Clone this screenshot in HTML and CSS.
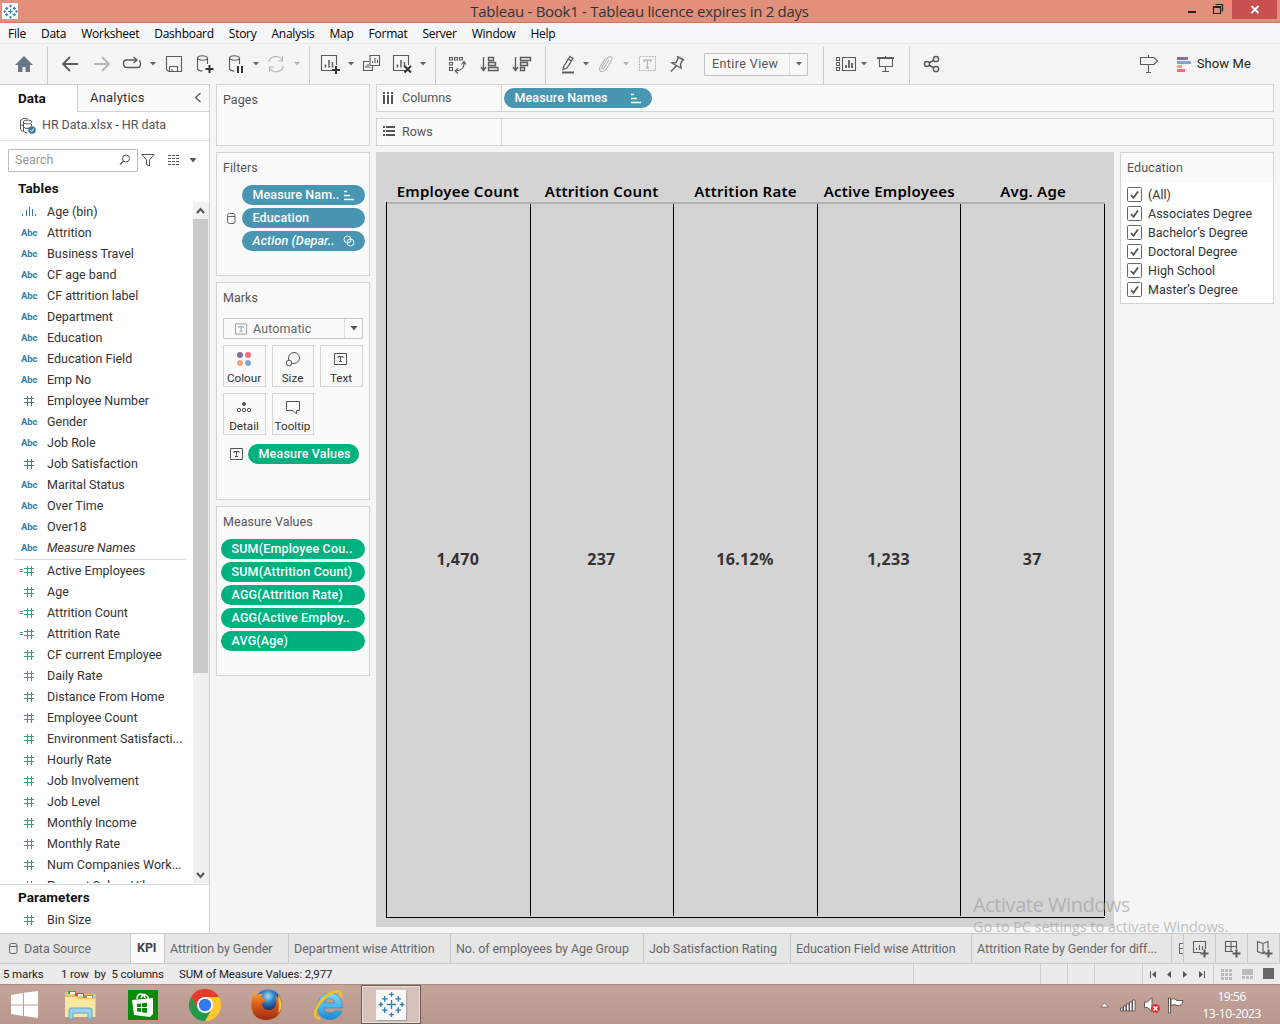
FILE: index.html
```html
<!DOCTYPE html>
<html lang="en">
<head>
<meta charset="utf-8">
<title>Tableau - Book1</title>
<link rel="stylesheet" href="styles.css">
</head>
<body>
<svg class="defs" width="0" height="0">
  <symbol id="logo" viewBox="0 0 24 24"><path d="M12 8v8M8 12h8M6 4.500v5M3.500 7h5M18 4.500v5M15.500 7h5M6 14.500v5M3.500 17h5M18 14.500v5M15.500 17h5M12 1v4M10 3h4M12 19v4M10 21h4M2.500 10v4M.5 12h4M21.500 10v4M19.500 12h4"/></symbol>
  <symbol id="caret" viewBox="0 0 8 20"><path d="M1 8h6L4 11.500z"/></symbol>
  <symbol id="num" viewBox="0 0 20 20"><path d="M7.500 5v10M11.500 5v10M4 7.500h10M4 11.500h10" fill="none"/></symbol>
  <symbol id="calc" viewBox="0 0 20 20"><path d="M7.500 5v10M11.500 5v10M4 7.500h10M4 11.500h10M0 8.500h3M0 10.500h3" fill="none"/></symbol>
  <symbol id="bin" viewBox="0 0 20 20"><path d="M2.500 12v2M6.500 8v6M9.500 5v9M12.500 7v7M15.500 12v2" fill="none"/></symbol>
  <symbol id="chart" viewBox="0 0 20 20"><path d="M14 16.500H1.500v-15h15V11"/><path stroke-width="1.500" d="M5.500 13.500v-3M9 13.500V6M12.500 13.500V8"/></symbol>
  <symbol id="cyl" viewBox="0 0 20 20"><ellipse cx="6.500" cy="4" rx="5" ry="2.200"/><path d="M1.500 4v11q1 2 5 2M11.500 4v6"/></symbol>
  <symbol id="tbox" viewBox="0 0 14 14"><path d="M.5 1.500h12v11H.5zM4 6V4.500h5V6M6.500 4.500v5M5 9.500h3"/></symbol>
  <symbol id="check" viewBox="0 0 15 15"><rect x=".5" y=".5" width="14" height="14" rx="1" fill="#fff" stroke="#666"/><path d="M4 8l2.500 2.800L11 4.500" fill="none" stroke="#555" stroke-width="1.800"/></symbol>
</svg>

<div class="window">
<header class="titlebar">
  <span class="applogo"><svg class="logo"><use href="#logo"/></svg></span>
  <h1>Tableau - Book1 - Tableau licence expires in 2 days</h1>
  <div class="winbtns">
    <svg width="55" height="22"><path d="M11 12h8" stroke="#222" stroke-width="2"/><path d="M36.500 6.500h7v7h-7zM36 7.500h8M38.500 4.500h7v7" fill="none" stroke="#222" stroke-width="1.200"/></svg>
    <span class="close"><svg width="10" height="9"><path d="M1.500 1l7 7M8.500 1l-7 7" stroke="#fff" stroke-width="1.800"/></svg></span>
  </div>
</header>
<nav class="menu"><span>File</span><span>Data</span><span>Worksheet</span><span>Dashboard</span><span>Story</span><span>Analysis</span><span>Map</span><span>Format</span><span>Server</span><span>Window</span><span>Help</span></nav>

<div class="toolbar">
  <div class="group g1"><svg class="ic home"><path d="M10 2L1 11h3v7h4.500v-5h3v5H16v-7h3z"/></svg></div>
  <div class="group g2">
    <svg class="ic thick"><path d="M18 10H3M10 3l-7 7 7 7"/></svg>
    <svg class="ic thick off s12"><path d="M2 10h15M10 3l7 7-7 7"/></svg>
    <svg class="ic s10"><path d="M14 6H4.500Q1.500 6 1.500 9.500T4.500 13.500h11q3 0 3-4 0-2-1.500-3M11.500 3l3.500 3-3.500 3" stroke-width="1.400"/></svg>
    <svg class="caret s7"><use href="#caret"/></svg>
    <svg class="ic s7"><path d="M2.500 2.500h15v15h-13l-2-2zM5.500 17v-4.500h8V17M8 15v2"/></svg>
    <svg class="ic s12"><use href="#cyl"/><path class="bold" d="M9.500 15h8M13.500 11v8"/></svg>
    <svg class="ic s10"><use x="2" href="#cyl"/><path class="bold" d="M12 12v7M16 12v7"/></svg>
    <svg class="caret s6"><use href="#caret"/></svg>
    <svg class="ic off s6"><path d="M2.500 8a7.500 7.500 0 0 1 13.500-2M16.500 2v5h-4.500M17.500 12A7.500 7.500 0 0 1 4 14.500M3.500 18v-5H8"/></svg>
    <svg class="caret off s7"><use href="#caret"/></svg>
  </div>
  <div class="group g3">
    <svg class="ic"><use href="#chart"/><path class="bold" d="M12 16h8M16 12v8"/></svg>
    <svg class="caret s7"><use href="#caret"/></svg>
    <svg class="ic s7"><path d="M8 1.500h9.500v10H8zM10.500 9V7M13 9V4M15.500 9V6M7 7.500H1.500v9h9V12M4 14v-2.500M6 14v-4M8 14v-1"/></svg>
    <svg class="ic s10"><use href="#chart"/><path class="bold" d="M12.500 12l6.500 6.500M19 12l-6.500 6.500"/></svg>
    <svg class="caret s7"><use href="#caret"/></svg>
  </div>
  <div class="group g4">
    <svg class="ic"><path d="M2.500 3.500h3v2.500h-3zM7.500 3.500h3v2.500h-3zM12.500 3.500h3v2.500h-3zM2.500 8.500h3v2.500h-3zM2.500 13.500h3v3h-3zM17 8q1 8-8 9M14.500 10.500L17 7.500l2 3M11 14.500l-3 2.500 3 2.500"/></svg>
    <svg class="ic s13"><path stroke-width="1.400" d="M3.500 3v13M1 13l2.500 3.500L6 13M8.500 3.500h5v3h-5zM8.500 8.500h7v3h-7zM8.500 13.500h9.500v3h-9.500z"/></svg>
    <svg class="ic s12"><path stroke-width="1.400" d="M3.500 3v13M1 13l2.500 3.500L6 13M8.500 3.500h10v3h-10zM8.500 8.500h7v3h-7zM8.500 13.500h4v3h-4z"/></svg>
  </div>
  <div class="group g5">
    <svg class="ic"><path d="M6 12l6-9.500 3 2-6 9.500-4 1.500zM10.500 5l3 2" stroke-width="1.300"/><path d="M4 18.500h12" stroke-width="2"/></svg>
    <svg class="caret s4"><use href="#caret"/></svg>
    <svg class="ic off s6"><path d="M13 6l-5 8q-1.500 1.500-2.500 0l6-10q3-3 4.500 0 .5 1.500-5 10-4 5-6.500 3-2-2 0-5l5-8"/></svg>
    <svg class="caret off s6"><use href="#caret"/></svg>
    <svg class="ic off s8"><path stroke-dasharray="2 1" d="M1.500 2.500h16v14h-16z"/><path stroke-width="1.400" d="M6 8V6h7v2M9.500 6v8M8 14h3"/></svg>
    <svg class="ic s10"><path stroke-width="1.400" d="M9 2.500l7 3.500M10.500 3.500L8 8.500l-4 .5 9 5-.5-4L15 5.500M8.500 11.500l-5.500 6"/></svg>
    <div class="combo"><span>Entire View</span><i><svg class="caret"><use href="#caret"/></svg></i></div>
  </div>
  <div class="group g6">
    <svg class="ic wide"><path d="M.5 3.500h3v3h-3zM.5 8.500h3v3h-3zM.5 13.500h3v3h-3zM6.500 3.500h13v13h-13z"/><path stroke-width="1.800" d="M10 14v-3M13 14V6M16 14V9"/></svg>
    <svg class="caret s2"><use href="#caret"/></svg>
    <svg class="ic s8"><path d="M3.500 4v8.500h13V4M9.500 2v1.500M9.500 13v4.500M6 17.500h7"/><path stroke-width="2" d="M1 4h17"/></svg>
  </div>
  <div class="group g7">
    <svg class="ic share"><circle cx="5" cy="10" r="2.500"/><circle cx="14" cy="5" r="2.600"/><circle cx="14" cy="15" r="2.600"/><path d="M7 9l5-3M7 11l5 3"/></svg>
  </div>
  <div class="showme">
    <svg class="ic"><path d="M1.500 3.500h13.500l3.500 3.500-3.500 3.500H1.500zM9.500 1v2.500M9.500 11v7M7 18.500h5"/></svg>
    <svg class="bars" width="14" height="16"><path fill="#86709a" d="M0 1h11v3H0z"/><path fill="#7fa5ce" d="M0 5h14v3H0z"/><path fill="#f5a47a" d="M0 9h5v3H0z"/><path fill="#fa6b80" d="M0 13h8v3H0z"/></svg>
    <span>Show Me</span>
  </div>
</div>

<main>
<aside class="datapane">
  <div class="ptabs"><b>Data</b><span>Analytics<svg width="8" height="12"><path d="M6.500 1L1.500 5.500l5 4.500" fill="none" stroke="#555" stroke-width="1.300"/></svg></span></div>
  <div class="source"><svg width="18" height="18"><path d="M1.500 3.500q3-3.500 7-2M1.500 3v9.500q1 2 3 2M4.500 5v9q1 2 4 2M12.500 7v2M1.500 7q1 2 3 1.500M4.500 10q2 2.500 6 1" fill="none" stroke="#555"/><ellipse cx="8.500" cy="5" rx="4.500" ry="2" fill="none" stroke="#555"/><circle cx="13" cy="13" r="3.800" fill="#387c9e"/><path d="M11.200 13l1.500 1.500 2.200-3" fill="none" stroke="#fff"/></svg><span>HR Data.xlsx - HR data</span></div>
  <div class="searchrow">
    <div class="search"><span>Search</span><svg width="12" height="12"><circle cx="7" cy="4.500" r="3.500" fill="none" stroke="#555"/><path d="M4.500 7L1 10.500" stroke="#555" stroke-width="1.300"/></svg></div>
    <svg class="funnel" width="14" height="14"><path d="M1 1.500h12L8.500 7v6l-3-1.500V7z" fill="none" stroke="#555"/></svg>
    <svg class="listic" width="13" height="12"><path d="M0 1.500h12M0 4.500h12M0 7.500h12M0 10.500h12" stroke="#555" stroke-dasharray="3 1"/></svg>
    <svg class="tri" width="8" height="5"><path d="M.5 0h7L4 4.500z" fill="#555"/></svg>
  </div>
  <h2>Tables</h2>
  <div class="fieldwrap">
    <ul class="fields">
      <li><svg><use href="#bin"/></svg>Age (bin)</li>
      <li><b>Abc</b>Attrition</li>
      <li><b>Abc</b>Business Travel</li>
      <li><b>Abc</b>CF age band</li>
      <li><b>Abc</b>CF attrition label</li>
      <li><b>Abc</b>Department</li>
      <li><b>Abc</b>Education</li>
      <li><b>Abc</b>Education Field</li>
      <li><b>Abc</b>Emp No</li>
      <li><svg><use href="#num"/></svg>Employee Number</li>
      <li><b>Abc</b>Gender</li>
      <li><b>Abc</b>Job Role</li>
      <li><svg><use href="#num"/></svg>Job Satisfaction</li>
      <li><b>Abc</b>Marital Status</li>
      <li><b>Abc</b>Over Time</li>
      <li><b>Abc</b>Over18</li>
      <li><b>Abc</b><em>Measure Names</em></li>
      <li class="rule"></li>
      <li class="m"><svg><use href="#calc"/></svg>Active Employees</li>
      <li class="m"><svg><use href="#num"/></svg>Age</li>
      <li class="m"><svg><use href="#calc"/></svg>Attrition Count</li>
      <li class="m"><svg><use href="#calc"/></svg>Attrition Rate</li>
      <li class="m"><svg><use href="#num"/></svg>CF current Employee</li>
      <li class="m"><svg><use href="#num"/></svg>Daily Rate</li>
      <li class="m"><svg><use href="#num"/></svg>Distance From Home</li>
      <li class="m"><svg><use href="#num"/></svg>Employee Count</li>
      <li class="m"><svg><use href="#num"/></svg>Environment Satisfacti...</li>
      <li class="m"><svg><use href="#num"/></svg>Hourly Rate</li>
      <li class="m"><svg><use href="#num"/></svg>Job Involvement</li>
      <li class="m"><svg><use href="#num"/></svg>Job Level</li>
      <li class="m"><svg><use href="#num"/></svg>Monthly Income</li>
      <li class="m"><svg><use href="#num"/></svg>Monthly Rate</li>
      <li class="m"><svg><use href="#num"/></svg>Num Companies Work...</li>
      <li class="m"><svg><use href="#num"/></svg>Percent Salary Hike</li>
    </ul>
    <div class="scroll">
      <svg width="15" height="17"><path d="M4 11l3.500-4 3.500 4" fill="none" stroke="#555" stroke-width="2"/></svg>
      <div class="thumb"></div>
      <svg width="15" height="17"><path d="M4 7l3.500 4L11 7" fill="none" stroke="#555" stroke-width="2"/></svg>
    </div>
  </div>
  <div class="params">
    <h2>Parameters</h2>
    <ul class="fields"><li class="m"><svg><use href="#num"/></svg>Bin Size</li></ul>
  </div>
</aside>

<section class="cards">
  <div class="card pages"><h3>Pages</h3></div>
  <div class="card filters"><h3>Filters</h3>
    <div class="frow"><span class="pill blue">Measure Nam..<svg width="12" height="11"><path d="M1 1.500h3M1 5.500h6M1 9.500h10" stroke="#fff" stroke-width="1.700"/></svg></span></div>
    <div class="frow"><svg class="db" width="9" height="11"><rect x=".5" y=".5" width="7.500" height="10" rx="2" fill="none" stroke="#666"/><path d="M1 3.500h7" stroke="#666"/></svg><span class="pill blue">Education</span></div>
    <div class="frow"><span class="pill blue"><em>Action (Depar..</em><svg width="12" height="12"><circle cx="4.500" cy="4.500" r="3.500"/><circle cx="7.500" cy="7.500" r="3.500"/></svg></span></div>
  </div>
  <div class="card marks"><h3>Marks</h3>
    <div class="marktype"><svg class="tb light"><use href="#tbox"/></svg><span>Automatic</span><i><svg class="bigcaret" width="8" height="5"><path d="M.5 0h7L4 4.500z" fill="#555"/></svg></i></div>
    <div class="markgrid">
      <div><svg width="16" height="16"><circle cx="4" cy="4" r="3" fill="#86709a"/><circle cx="12" cy="4" r="3" fill="#fa6b80"/><circle cx="4" cy="12" r="3" fill="#f5a47a"/><circle cx="12" cy="12" r="3" fill="#7fa5ce"/></svg>Colour</div>
      <div><svg class="ln" width="16" height="16"><circle cx="9" cy="7" r="5.500"/><circle cx="4" cy="12" r="2.800" fill="#fafafa"/></svg>Size</div>
      <div><svg class="tb"><use href="#tbox"/></svg>Text</div>
      <div><svg class="ln" width="16" height="16"><circle cx="8" cy="5" r="1.500" fill="#555"/><circle cx="3" cy="11" r="1.700"/><circle cx="8" cy="11" r="1.700"/><circle cx="13" cy="11" r="1.700"/></svg>Detail</div>
      <div><svg class="ln" width="16" height="16"><path d="M1.500 2.500h13v9h-3v3.500l-3.500-3.500h-6.500z"/></svg>Tooltip</div>
    </div>
    <div class="mrow"><svg class="tb"><use href="#tbox"/></svg><span class="pill green">Measure Values</span></div>
  </div>
  <div class="card mvals"><h3>Measure Values</h3>
    <span class="pill green">SUM(Employee Cou..</span><span class="pill green">SUM(Attrition Count)</span><span class="pill green">AGG(Attrition Rate)</span><span class="pill green">AGG(Active Employ..</span><span class="pill green">AVG(Age)</span>
  </div>
</section>

<section class="work">
  <div class="shelf"><label><svg width="14" height="14"><path d="M2 1v2M6 1v2M10 1v2M2 4v9M6 4v9M10 4v9" stroke="#555" stroke-width="2"/></svg>Columns</label><span class="pill blue">Measure Names<svg width="12" height="11"><path d="M1 1.500h3M1 5.500h6M1 9.500h10" stroke="#fff" stroke-width="1.700"/></svg></span></div>
  <div class="shelf"><label><svg width="14" height="14"><path d="M1 2h2M1 6h2M1 10h2M4 2h9M4 6h9M4 10h9" stroke="#555" stroke-width="2"/></svg>Rows</label></div>
  <div class="stage">
    <div class="view">
      <div class="kpihead"><span>Employee Count</span><span>Attrition Count</span><span>Attrition Rate</span><span>Active Employees</span><span>Avg. Age</span></div>
      <div class="kpibody"><span>1,470</span><span>237</span><span>16.12%</span><span>1,233</span><span>37</span></div>
    </div>
    <div class="legend"><h3>Education</h3>
      <ul><li><svg><use href="#check"/></svg>(All)</li><li><svg><use href="#check"/></svg>Associates Degree</li><li><svg><use href="#check"/></svg>Bachelor’s Degree</li><li><svg><use href="#check"/></svg>Doctoral Degree</li><li><svg><use href="#check"/></svg>High School</li><li><svg><use href="#check"/></svg>Master’s Degree</li></ul>
    </div>
  </div>
</section>
</main>

<div class="sheets">
  <span class="ds"><svg width="9" height="11"><rect x=".5" y=".5" width="7.500" height="10" rx="2" fill="none" stroke="#666"/><path d="M1 3.500h7" stroke="#666"/></svg>Data Source</span>
  <span class="cur">KPI</span>
  <span class="t1">Attrition by Gender</span><span class="t2">Department wise Attrition</span><span class="t3">No. of employees by Age Group</span><span class="t4">Job Satisfaction Rating</span><span class="t5">Education Field wise Attrition</span><span class="t6">Attrition Rate by Gender for diff...</span>
  <span class="cut"><svg width="5" height="12"><path d="M5 .5H.5v10H5M0 5.500h5" fill="none" stroke="#666"/></svg></span>
  <span class="nw"><svg class="ic"><path d="M10 13.500H2.500v-11h12V10M5.500 11V9M8.500 11V6M11.500 11V7"/><path class="plus" d="M9.500 14.500h8M13.500 10.500v8"/></svg></span>
  <span class="nw"><svg class="ic"><path d="M10 12.500H2.500v-10h11V10M2.500 7.500h11M8 2.500v10"/><path class="plus" d="M9.500 14.500h8M13.500 10.500v8"/></svg></span>
  <span class="nw"><svg class="ic"><path d="M10 12.500l-2 2-5.500-2v-10l5.500 2 5-2v7M8 4.500v10"/><path class="plus" d="M9.500 14.500h8M13.500 10.500v8"/></svg></span>
</div>
<div class="status">
  <span class="a">5 marks</span><span class="b">1 row&nbsp; by&nbsp; 5 columns</span><span class="c">SUM of Measure Values: 2,977</span>
  <i class="w1"></i><i class="w2"></i><i class="w2"></i><i class="w3"></i>
  <i class="nav"><svg width="58" height="9" fill="#555"><path d="M0 1h1v7H0zM6 1v7L2 4.500zM21 1v7l-4-3.500zM33 1v7l4-3.500zM49 1v7l4-3.500zM54 1h1v7h-1z"/></svg></i>
  <i class="modes"><svg width="54" height="12"><path fill="#bbb" d="M0 1h3v3H0zM4 1h3v3H4zM8 1h3v3H8zM0 5h3v3H0zM4 5h3v3H4zM8 5h3v3H8zM0 9h3v3H0zM4 9h3v3H4zM8 9h3v3H8zM21 1h11v6H21zM21 8h3v3h-3zM25 8h3v3h-3zM29 8h3v3h-3z"/><path fill="#666" d="M42 0h11v11H42z"/></svg></i>
</div>

<footer class="taskbar">
  <svg class="start" width="28" height="28"><path fill="#fff" d="M0 4l12-2v11.500H0zM13 1.800L27 0v13.500H13zM0 14.500h12V25L0 23zM13 14.500h14V27l-14-2z"/></svg>
  <svg class="explorer" width="34" height="30"><path fill="#e3c568" d="M1 2h11l2 2h17q1 0 1 1v22H1z"/><path fill="#30ad45" d="M4 1h8v3H4z"/><path fill="#d5463b" d="M11 3h9v3h-9z"/><path fill="#4ba5dd" d="M19 5h10v3H19z"/><path fill="#f7e7a1" d="M1 7h11l2 2h17v18H1z"/><path fill="#fff" d="M6 2h5v2H6zM14 4h5v2h-5zM23 6h5v2h-5z"/><path fill="#9bd3ee" stroke="#5aa6cb" d="M5 29V20q0-2 3-2h17q3 0 3 2v9h-4v-6H9v6z"/></svg>
  <svg class="store" width="30" height="30"><path fill="#0a8a0a" d="M0 0h30v30H0z"/><path fill="#fff" d="M4 10l21-2v16l-3 3L6 25z"/><path d="M9 9q0-5 4-5 3 0 4 4M13 8q2-5 5-3 3 2 2 4" fill="none" stroke="#fff" stroke-width="1.500"/><path fill="#0a8a0a" d="M9 14l4-.5V17H9zM14 13.300l5-.5V17h-5zM9 18h4v4l-4-.5zM14 18h5v5l-5-.7z"/></svg>
  <svg class="chrome" width="32" height="32"><path fill="#e33b2e" d="M2.140 8A16 16 0 0 1 29.860 8L16 8 9 20z"/><path fill="#fdc92e" d="M29.860 8A16 16 0 0 1 16 32l7-12L22 12 16 8z"/><path fill="#249a48" d="M16 32A16 16 0 0 1 2.140 8l7 12 7 4 5-1z"/><circle cx="16" cy="16" r="8" fill="#fff"/><circle cx="16" cy="16" r="6.200" fill="#3478ea"/></svg>
  <svg class="firefox" width="32" height="32"><defs><radialGradient id="fb" cx=".5" cy=".25"><stop stop-color="#9bdcf5"/><stop offset=".5" stop-color="#2e7cbf"/><stop offset="1" stop-color="#143668"/></radialGradient><linearGradient id="fo" x2="0" y2="1"><stop stop-color="#f5ad32"/><stop offset=".4" stop-color="#e0601b"/><stop offset="1" stop-color="#9d2a10"/></linearGradient></defs><circle cx="17" cy="14" r="13.500" fill="url(#fb)"/><path fill="url(#fo)" d="M3 3q1 2.500 3 3 3-2 6-1-2 2-1 4l4 1q0 3-4 4 0 6 6 7 7 0 8-6 1-4-1-8 4 2 5 5 0-4-2-7 5 5 4 12-2 13-15 14Q2 31 .500 18 0 9 3 3z"/><path fill="#f8c84a" d="M27 6q4 6 3.500 12-1 4-3 6 1-9-.5-18z"/></svg>
  <svg class="ie" width="32" height="32"><defs><linearGradient id="eb" x2="0" y2="1"><stop stop-color="#88e1fc"/><stop offset="1" stop-color="#1689d2"/></linearGradient></defs><path fill="url(#eb)" stroke="#2587bd" stroke-width=".6" d="M17 4q12 1 12.500 15H11q1 5 6 5 3 0 5-2h7q-3 8-12 8.500Q5 30 4 18 5 5 17 4zM11 14h11q-1-4.500-5.500-4.500T11 14z"/><path d="M7 29q-7 1-4-8Q8 8 20 3q9-3 8 5" fill="none" stroke="#f5c321" stroke-width="2.600"/></svg>
  <span class="tableau"><span><svg class="logo"><use href="#logo"/></svg></span></span>
  <div class="tray">
    <svg width="84" height="20"><path fill="#fff" stroke="#5b4b46" stroke-width=".7" d="M.5 12l4-4 4 4z"/><path fill="#fff" stroke="#4a3c38" stroke-width=".8" d="M20.500 13h2.500v3h-2.500zM23.500 11h2.500v5h-2.500zM26.500 9h2.500v7h-2.500zM29.500 7h2.500v9h-2.500zM32.500 5h2.500v11h-2.500zM44.500 7h3l4.500-4.500v14l-4.500-4h-3z"/><circle cx="55.500" cy="13.500" r="4.500" fill="#dc3737"/><path d="M53.500 11.500l4 4M57.500 11.500l-4 4" stroke="#fff" stroke-width="1.500"/><path fill="#fff" stroke="#4a3c38" stroke-width=".8" d="M68.500 3h2v15h-2zM71 4q4-1 6 1.500h6q-1 6-6 5-3-2-6 0z"/></svg>
    <div class="clock"><span>19:56</span><span>13-10-2023</span></div>
  </div>
</footer>
<div class="watermark"><p>Activate Windows</p><small>Go to PC settings to activate Windows.</small></div>
</div>
</body>
</html>
```
FILE: styles.css
```css
* { box-sizing: border-box; }
body { margin: 0; font: 12.5px/16px Roboto, sans-serif; color: #333; }
h1, h2, h3, ul, p { margin: 0; padding: 0; font-weight: 400; list-style: none; }
svg { flex: none; display: block; }
i { font-style: normal; }
.defs { position: absolute; }
.window { width: 1280px; height: 1024px; display: flex; flex-direction: column; background: #f5f5f5; position: relative; overflow: hidden; white-space: nowrap; }

.titlebar { height: 23px; background: #e2907b; border-bottom: 1px solid #c57864; display: flex; align-items: flex-start; justify-content: space-between; }
.applogo { width: 16px; height: 16px; margin: 3px 0 0 2px; background: #fff; display: grid; place-items: center; }
.logo { width: 15px; height: 15px; fill: none; stroke: #2f7cae; stroke-width: 1.7; }
.titlebar h1 { font: 15px/23px "Open Sans", sans-serif; color: #333; letter-spacing: -0.28px; margin-left: 84px; }
.winbtns { display: flex; width: 103px; justify-content: flex-end; }
.close { width: 45px; height: 19px; background: #c85050; display: grid; place-items: center; margin-right: 3px; }

.menu { height: 21px; background: #f5f6f8; border-bottom: 1px solid #e8e8e8; display: flex; padding-left: 8px; gap: 15px; font: 12px/21px "Open Sans", sans-serif; color: #000; letter-spacing: -0.26px; }

.toolbar { height: 40px; display: flex; }
.group { display: flex; align-items: center; border-right: 1px solid #ccc; margin-top: 3px; height: 37px; padding-bottom: 3px; }
.ic { width: 20px; height: 20px; fill: none; stroke: #5c5c5c; stroke-width: 1.1; }
.ic.wide { width: 22px; }
.ic.thick { stroke-width: 1.8; }
.ic.off { stroke: #b5b5b5; }
.bold { stroke: #333; stroke-width: 2; }
.ic.home { fill: #697786; stroke: none; }
.caret { width: 8px; height: 20px; fill: #666; stroke: none; }
.caret.off { fill: #b5b5b5; }
.g1 { width: 48px; padding-left: 14px; }
.g2 { width: 262px; padding-left: 12px; }
.g3 { width: 126px; padding-left: 10px; }
.g4 { width: 110px; padding-left: 11px; }
.g5 { width: 278px; padding-left: 12px; }
.g6 { width: 86px; padding-left: 12px; }
.g7 { border: 0; padding-left: 12px; }
.ic.share { stroke-width: 1.5; }
.s2 { margin-left: 2px; } .s4 { margin-left: 4px; } .s6 { margin-left: 6px; } .s7 { margin-left: 7px; } .s8 { margin-left: 8px; }
.s10 { margin-left: 10px; } .s12 { margin-left: 12px; } .s13 { margin-left: 13px; }
.combo { width: 104px; height: 23px; margin-left: 16px; border: 1px solid #c4c4c4; display: flex; align-items: center; background: #f8f8f8; border-radius: 1px; }
.combo span { flex: 1; padding-left: 7px; letter-spacing: .4px; color: #555; }
.combo i { border-left: 1px solid #e0e0e0; width: 18px; height: 21px; display: grid; place-items: center; }
.showme { margin-left: auto; display: flex; align-items: center; padding-right: 29px; color: #222; font-size: 13px; letter-spacing: .1px; }
.bars { margin: 0 6px 0 18px; }

main { display: flex; height: 849px; }
.datapane { width: 210px; background: #fff; border-right: 1px solid #d0d0d0; border-top: 1px solid #d0d0d0; display: flex; flex-direction: column; }
.ptabs { display: flex; height: 27px; line-height: 26px; font-size: 13px; color: #333; }
.ptabs b { width: 77px; padding-left: 18px; color: #111; font-size: 13.5px; }
.ptabs span { flex: 1; display: flex; align-items: center; justify-content: space-between; padding: 0 7px 0 12px; border: solid #d0d0d0; border-width: 0 0 1px 1px; background: #fafafa; letter-spacing: .2px; }
.source { height: 29px; border-bottom: 1px solid #e0e0e0; display: flex; align-items: center; padding: 0 0 2px 19px; gap: 5px; color: #555; letter-spacing: -.04px; }
.source svg { margin-top: 2px; }
.searchrow { display: flex; align-items: center; padding: 8px 0 0 8px; height: 31px; }
.search { width: 130px; height: 23px; border: 1px solid #bbb; border-radius: 1px; display: flex; align-items: center; justify-content: space-between; padding: 0 6px 1px 6px; color: #999; }
.funnel { margin: -2px 0 0 3px; }
.listic { margin: -2px 0 0 13px; }
.tri { margin-left: 8px; }
h2 { font-size: 13.500px; font-weight: 700; color: #111; padding-left: 18px; letter-spacing: .12px; }
.datapane > h2 { height: 29px; line-height: 32px; }
.fieldwrap { display: flex; height: 682px; overflow: hidden; justify-content: space-between; }
.fields { width: 190px; }
.fields li { height: 21px; display: flex; align-items: center; gap: 7px; padding-left: 20px; line-height: 22px; }
.fields svg { width: 20px; height: 20px; stroke: #387c9e; stroke-width: 1.1; align-self: flex-start; margin-top: 1px; }
.fields b { width: 20px; padding-left: 1px; font-size: 9.5px; color: #387c9e; line-height: 22px; letter-spacing: -.1px; }
.fields .m svg { stroke: #3a9c78; }
.fields .rule { height: 2px; margin: 0 4px 0 15px; border-bottom: 1px solid #d8d8d8; }
.scroll { width: 16px; background: #f0f0f0; display: flex; flex-direction: column; margin-top: 1px; }
.thumb { height: 454px; width: 15px; background: #cacaca; margin-bottom: auto; }
.params { border-top: 1px solid #d8d8d8; height: 49px; margin-top: 1px; }
.params h2 { height: 24px; line-height: 24px; }

.cards { width: 160px; padding: 0 0 0 6px; display: flex; flex-direction: column; gap: 6px; }
.card { width: 154px; border: 1px solid #d4d4d4; background: #fafafa; }
h3 { font-size: 12.5px; line-height: 16px; padding: 7px 0 0 6px; color: #555; letter-spacing: .05px; }
.pages { height: 62px; }
.filters { height: 124px; }
.marks { height: 218px; }
.mvals { height: 170px; display: flex; flex-direction: column; gap: 3px; }
.mvals h3 { margin-bottom: 6px; }
.mvals .pill { margin-left: 4px; width: 144px; }
.pill { height: 20px; border-radius: 10px; color: #fff; font-weight: 500; line-height: 20px; padding: 0 10px 0 10.5px; display: flex; align-items: center; justify-content: space-between; letter-spacing: .12px; }
.pill circle { fill: none; stroke: #fff; }
.blue { background: #4996b2; }
.green { background: #00b180; letter-spacing: .18px; }
.frow { display: flex; justify-content: flex-end; align-items: center; padding-right: 4px; margin-top: 3px; }
.filters h3 { margin-bottom: 9px; }
.frow .pill { width: 123px; }
.db { margin-right: 6px; }
.marktype { margin: 12px 6px 0; height: 21px; border: 1px solid #c8c8c8; display: flex; align-items: center; color: #666; letter-spacing: .1px; border-radius: 1px; }
.marktype span { flex: 1; padding-left: 5px; }
.marktype i { width: 18px; height: 19px; border-left: 1px solid #e0e0e0; display: grid; place-items: center; }
.tb { width: 14px; height: 14px; stroke: #555; fill: none; }
.marktype .tb { margin-left: 11px; width: 13px; stroke: #999; }
.markgrid { display: grid; grid-template-columns: 43px 42px 43px; gap: 6px; padding: 6px 6px 0; }
.markgrid div { height: 42px; border: 1px solid #d4d4d4; display: flex; flex-direction: column; align-items: center; justify-content: space-between; padding: 5px 1px 0 0; font-size: 11.700px; line-height: 16px; color: #333; }
.markgrid .tb { margin-top: 1px; }
.ln { fill: none; stroke: #555; }
.mrow { display: flex; align-items: center; padding-left: 13px; gap: 4px; margin-top: 9px; }
.mrow .pill { width: 111px; }

.work { width: 904px; padding-left: 6px; display: flex; flex-direction: column; gap: 6px; }
.shelf { width: 898px; height: 28px; border: 1px solid #d4d4d4; background: #fafafa; display: flex; align-items: center; }
.shelf label { width: 125px; height: 26px; border-right: 1px solid #d4d4d4; display: flex; align-items: center; gap: 6px; padding-left: 5px; color: #555; }
.shelf .pill { width: 148px; margin-left: 2px; }
.stage { display: flex; gap: 6px; align-items: flex-start; }
.view { width: 738px; height: 775px; background: #d4d4d4; padding: 28px 9px 9px 10px; display: flex; flex-direction: column; }
.kpihead, .kpibody { display: grid; grid-template-columns: repeat(5, 1fr); text-align: center; }
.kpihead { height: 24px; border-bottom: 2px solid #b3b3b3; font: 600 15px/22px "Noto Sans", sans-serif; color: #000; letter-spacing: .24px; }
.kpibody { flex: 1; border-left: 1px solid #000; border-bottom: 1px solid #000; font: 700 16px/16px "Noto Sans", sans-serif; color: #333; margin-top: -2px; letter-spacing: .3px; }
.kpibody span { border-right: 1px solid #000; margin: 2px 0 1px; padding: 0 1px 3px 0; display: grid; place-items: center; }
.legend { width: 154px; height: 152px; border: 1px solid #d4d4d4; background: #fff; }
.legend h3 { background: #fafafa; height: 30px; }
.legend ul { padding: 2px 0 0 6px; }
.legend li { height: 19px; display: flex; align-items: center; gap: 6px; }
.legend svg { width: 15px; height: 15px; }

.sheets { height: 31px; border: solid #c8c8c8; border-width: 1px 0; background: #e6e6e6; display: flex; color: #666; line-height: 29px; letter-spacing: -.07px; }
.sheets span { border-right: 1px solid #c8c8c8; padding-left: 5px; overflow: hidden; display: flex; align-items: center; }
.ds { width: 131px; gap: 6px; }
.sheets .ds { padding-left: 9px; }
.sheets .cur { width: 34px; background: #fafafa; font-weight: 700; color: #444; padding: 0 0 2px 6px; }
.t1 { width: 124px; } .t2 { width: 162px; } .t3 { width: 193px; } .t4 { width: 147px; } .t5 { width: 181px; } .t6 { width: 200px; }
.sheets .cut { width: 12px; padding-left: 7px; }
.sheets .nw { width: 32px; padding-left: 7px; }
.plus { stroke-width: 2; }
.status { height: 20px; background: #ebebeb; display: flex; font-size: 11.5px; line-height: 20px; color: #222; letter-spacing: -.1px; }
.status span { padding-left: 3px; }
.a { width: 58px; } .b { width: 118px; } .c { flex: 1; }
.status i { border-left: 1px solid #ccc; display: flex; align-items: center; }
.w1 { width: 127px; } .w2 { width: 27px; } .w3 { width: 48px; }
.status .nav { width: 71px; padding-left: 7px; }
.status .modes { width: 67px; padding-left: 7px; }

.taskbar { height: 40px; background: linear-gradient(#c5a49a, #b8988e); border-top: 1px solid #a98c83; display: flex; align-items: center; }
.start { margin-left: 11px; }
.explorer { margin-left: 25px; } .store { margin-left: 30px; } .chrome { margin-left: 31px; } .firefox { margin-left: 30px; } .ie { margin-left: 30px; }
.tableau { width: 60px; height: 39px; margin-left: 16px; border: 1px solid #6d5b55; background: #d6c2bc; display: grid; place-items: center; box-shadow: inset 0 0 0 1px #eadfdb; }
.tableau span { width: 30px; height: 30px; background: #f8f8f8; display: grid; place-items: center; box-shadow: 1px 1px 1px #8888; }
.tableau .logo { width: 27px; height: 27px; stroke-width: 1.2; }
.tray { margin-left: auto; display: flex; align-items: center; padding-right: 19px; gap: 18px; color: #fff; }
.clock { display: flex; flex-direction: column; align-items: center; font: 12px/17px "Open Sans", sans-serif; letter-spacing: -0.4px; }
.watermark { position: absolute; left: 973px; top: 891px; font-family: "Open Sans", sans-serif; color: #9999; }
.watermark p { font-size: 20px; line-height: 27px; letter-spacing: -.45px; }
.watermark small { display: block; font-size: 14.5px; line-height: 18px; letter-spacing: -.08px; }
```
